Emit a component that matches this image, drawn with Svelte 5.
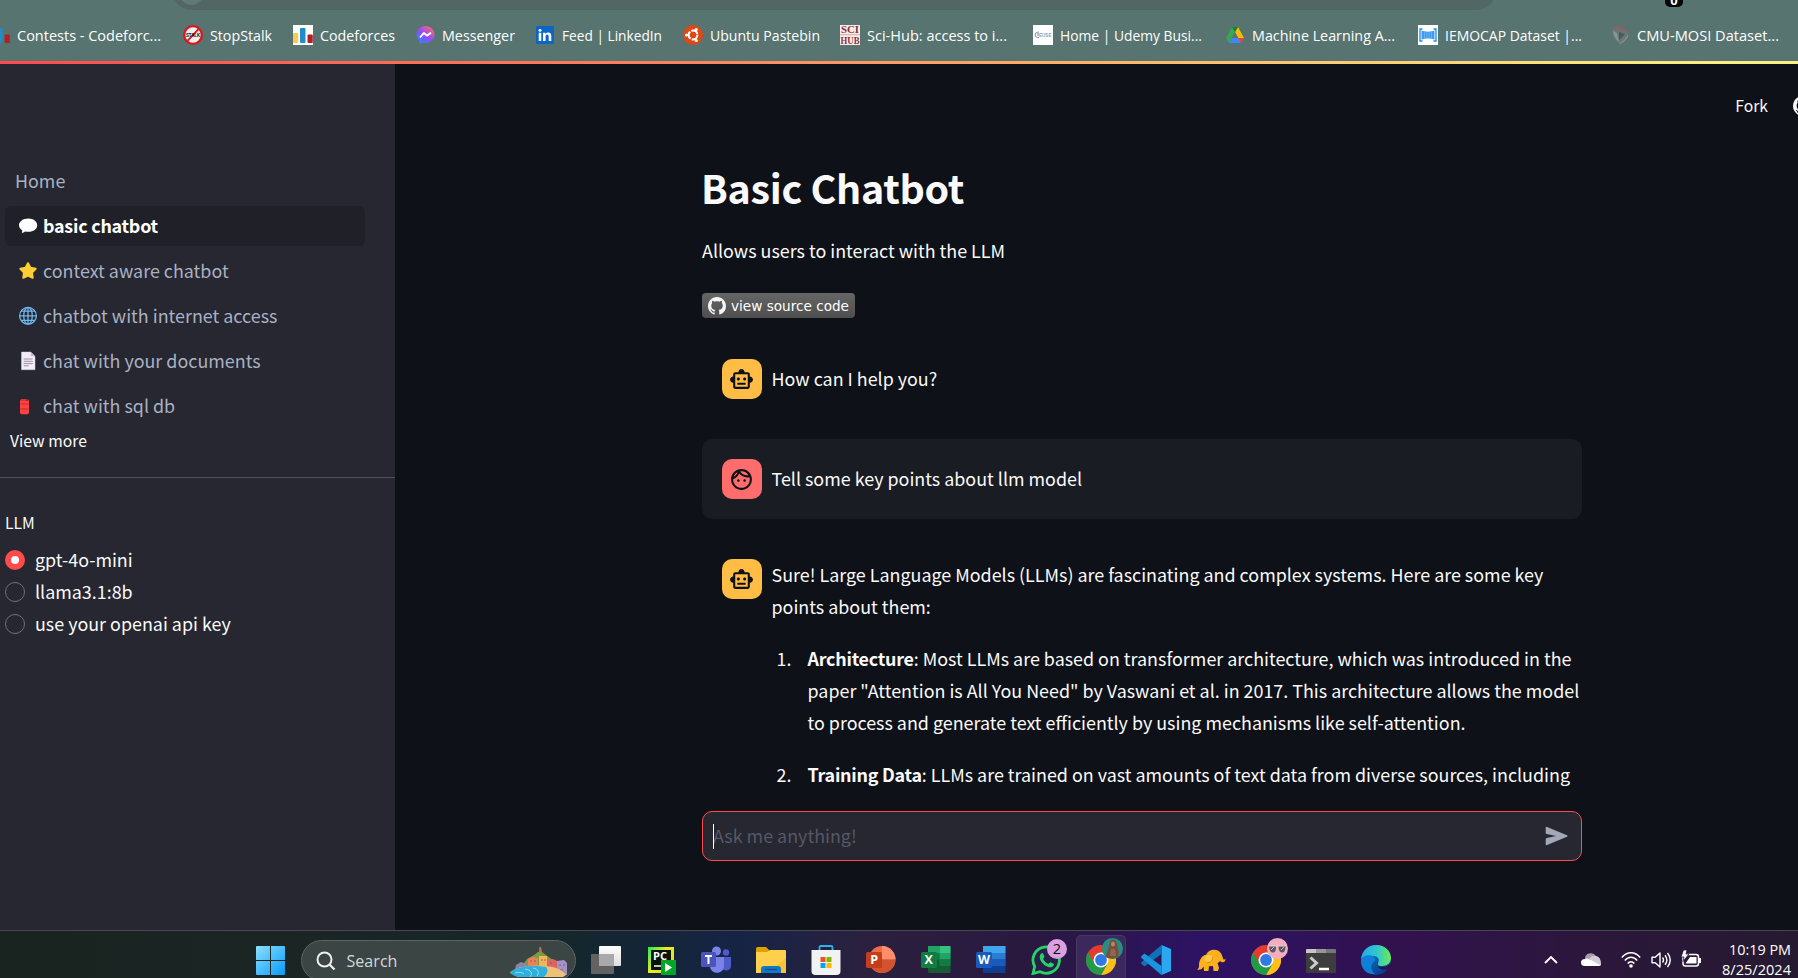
<script lang="ts">
  const bookmarks = [
    { icon: 'cf2', label: 'Contests - Codeforc...', width: 193, text: 144 },
    { icon: 'stop', label: 'StopStalk', width: 110, text: 62 },
    { icon: 'cf', label: 'Codeforces', width: 122, text: 75 },
    { icon: 'messenger', label: 'Messenger', width: 120, text: 73 },
    { icon: 'linkedin', label: 'Feed | LinkedIn', width: 148, text: 100 },
    { icon: 'ubuntu', label: 'Ubuntu Pastebin', width: 157, text: 110 },
    { icon: 'scihub', label: 'Sci-Hub: access to i...', width: 193, text: 140 },
    { icon: 'udemy', label: 'Home | Udemy Busi...', width: 192, text: 142 },
    { icon: 'drive', label: 'Machine Learning A...', width: 193, text: 143 },
    { icon: 'iemocap', label: 'IEMOCAP Dataset |...', width: 192, text: 137 },
    { icon: 'cmu', label: 'CMU-MOSI Dataset...', width: 190, text: 142 },
  ];
  const pages = [
    { icon: 'bubble', label: 'basic chatbot', active: true },
    { icon: 'star', label: 'context aware chatbot' },
    { icon: 'globe', label: 'chatbot with internet access' },
    { icon: 'doc', label: 'chat with your documents' },
    { icon: 'can', label: 'chat with sql db' },
  ];
  const models = ['gpt-4o-mini', 'llama3.1:8b', 'use your openai api key'];
  const apps = ['tasks', 'pycharm', 'teams', 'folder', 'store', 'ppt', 'excel', 'word', 'whatsapp', 'chrome', 'vscode', 'elephant', 'chrome2', 'terminal', 'edge'];
  let selected = $state('gpt-4o-mini');

  const github = 'M8 0C3.58 0 0 3.58 0 8c0 3.54 2.29 6.53 5.47 7.59.4.07.55-.17.55-.38 0-.19-.01-.82-.01-1.49-2.01.37-2.53-.49-2.69-.94-.09-.23-.48-.94-.82-1.13-.28-.15-.68-.52-.01-.53.63-.01 1.08.58 1.23.82.72 1.21 1.87.87 2.33.66.07-.52.28-.87.51-1.07-1.78-.2-3.64-.89-3.64-3.95 0-.87.31-1.59.82-2.15-.08-.2-.36-1.02.08-2.12 0 0 .67-.21 2.2.82.64-.18 1.32-.27 2-.27.68 0 1.36.09 2 .27 1.53-1.04 2.2-.82 2.2-.82.44 1.1.16 1.92.08 2.12.51.56.82 1.27.82 2.15 0 3.07-1.87 3.75-3.65 3.95.29.25.54.73.54 1.48 0 1.07-.01 1.93-.01 2.2 0 .21.15.46.55.38A8.013 8.013 0 0016 8c0-4.42-3.58-8-8-8z';
  const robot = 'M20 9V7c0-1.1-.9-2-2-2h-3c0-1.66-1.34-3-3-3S9 3.34 9 5H6c-1.1 0-2 .9-2 2v2c-1.66 0-3 1.34-3 3s1.34 3 3 3v4c0 1.1.9 2 2 2h12c1.1 0 2-.9 2-2v-4c1.66 0 3-1.34 3-3s-1.34-3-3-3zm-2 10H6V7h12v12zm-9-6c-.83 0-1.5-.67-1.5-1.5S8.17 10 9 10s1.5.67 1.5 1.5S9.83 13 9 13zm7.5-1.5c0 .83-.67 1.5-1.5 1.5s-1.5-.67-1.5-1.5.67-1.5 1.5-1.5 1.5.67 1.5 1.5zM8 15h8v2H8v-2z';
  const face = 'M10.25 13c0 .69-.56 1.25-1.25 1.25S7.75 13.69 7.75 13s.56-1.25 1.25-1.25 1.25.56 1.25 1.25zM15 11.75c-.69 0-1.25.56-1.25 1.25s.56 1.25 1.25 1.25 1.25-.56 1.25-1.25-.56-1.25-1.25-1.25zm7 .25c0 5.52-4.48 10-10 10S2 17.52 2 12 6.48 2 12 2s10 4.48 10 10zM10.66 4.12C12.06 6.44 14.6 8 17.5 8c.46 0 .91-.05 1.34-.12C17.44 5.56 14.9 4 12 4c-.46 0-.91.05-1.34.12zM4.42 9.47c1.71-.97 3.03-2.55 3.66-4.44C6.37 6 5.05 7.58 4.42 9.47zM20 12c0-.78-.12-1.53-.33-2.24-.7.15-1.42.24-2.17.24-3.13 0-5.92-1.44-7.76-3.69C8.69 8.87 6.6 10.88 4 11.86c.01.04 0 .09 0 .14 0 4.41 3.59 8 8 8s8-3.59 8-8z';
</script>

{#snippet siteIcon(name: string)}
  <svg class="fav" viewBox="0 0 20 20">
    {#if name === 'cf' || name === 'cf2'}
      {#if name === 'cf'}<rect width="20" height="20" fill="#fff" />{/if}
      <rect x="0" y="8" width="5.3" height="10" rx="1" fill="#f8cb55" />
      <rect x="7" y="3" width="5.5" height="15" rx="1" fill="#1f8dcb" />
      <rect x="14.5" y="9.5" width="5.3" height="8.5" rx="1" fill="#b21f26" />
    {:else if name === 'stop'}
      <circle cx="10" cy="10" r="8.8" fill="#f3eeee" stroke="#d9171d" stroke-width="2.3" />
      <path d="M15.5 4.2 4.5 15.8" stroke="#d9171d" stroke-width="1.8" />
      <text x="3" y="12" font-family="Liberation Sans" font-size="5.6" font-weight="700" textLength="14" lengthAdjust="spacingAndGlyphs">STALK</text>
    {:else if name === 'messenger'}
      <defs><linearGradient id="ms" x1="0" y1="1" x2=".8" y2="0"><stop offset="0" stop-color="#1694ff" /><stop offset=".5" stop-color="#8b4cff" /><stop offset="1" stop-color="#ff6570" /></linearGradient></defs>
      <path d="M10.500 1C5.400 1 1.500 4.700 1.500 9.600c0 2.700 1.100 4.800 3 6.400v3l3-1.400c1 .3 2 .4 3 .4 5.100 0 9-3.600 9-8.400S15.600 1 10.500 1z" fill="url(#ms)" />
      <path d="m5 12.500 3.800-4.500 3.200 2.600 4-2.800" fill="none" stroke="#fff" stroke-width="1.900" stroke-linejoin="round" />
    {:else if name === 'linkedin'}
      <rect x="1" y="1" width="18" height="18" rx="1.500" fill="#0a66c2" />
      <path d="M3.700 7.800h2.600V16H3.700zM8 7.800h2.500V9c.6-1 1.500-1.500 2.800-1.500 2.300 0 3 1.500 3 3.800V16h-2.600v-4.200c0-1.200-.2-2.200-1.400-2.200-1.300 0-1.700 1-1.700 2.200V16H8z" fill="#fff" /><circle cx="5" cy="5.200" r="1.500" fill="#fff" />
    {:else if name === 'ubuntu'}
      <circle cx="10" cy="10" r="10" fill="#dd4814" />
      <circle cx="10" cy="10" r="4.400" fill="none" stroke="#fff" stroke-width="2" stroke-dasharray="8 1.200" />
      <circle cx="3.600" cy="10" r="1.600" fill="#fff" /><circle cx="13.200" cy="4.500" r="1.600" fill="#fff" /><circle cx="13.200" cy="15.500" r="1.600" fill="#fff" />
    {:else if name === 'scihub'}
      <rect width="20" height="20" fill="#f7eeee" />
      <path d="M0 9.700h20" stroke="#d3aaa8" />
      <text x="1" y="8.200" class="sci" textLength="18" lengthAdjust="spacingAndGlyphs">SCI</text>
      <text x=".5" y="18.500" class="sci" textLength="19" lengthAdjust="spacingAndGlyphs">HUB</text>
    {:else if name === 'udemy'}
      <rect width="20" height="20" fill="#fff" />
      <path d="M6 7c-5 0-5 6 0 5.500M5 8v3" fill="none" stroke="#8b99a0" stroke-width="1.200" />
      <text x="6" y="12" font-family="Liberation Sans" font-size="6" font-weight="700" fill="#78a7be" textLength="12.500" lengthAdjust="spacingAndGlyphs">EUSE</text>
    {:else if name === 'drive'}
      <path d="M7 2h6l6 11h-6z" fill="#fbbc04" /><path d="M7 2 1 13l3 5 9-16z" fill="#34a853" /><path d="M4 18h12l3-5H7z" fill="#4285f4" /><path d="m16 18 3-5h-6z" fill="#ea4335" /><path d="m7 2 3 5 3-5z" fill="#188038" /><path d="m10 7 3.300 6H6.700z" fill="#577470" />
    {:else if name === 'iemocap'}
      <rect width="20" height="20" fill="#fff" />
      <path d="M4.500 4H2v12h2.500M15.500 4H18v12h-2.500" fill="none" stroke="#2187e7" stroke-width="1.300" />
      <path d="M3.500 5.500c3 1.500 10 1.500 13 0v9c-3-1.500-10-1.500-13 0z" fill="#3f9cf2" /><path d="M6.500 7v6M8.800 7v6M11.200 7v6M13.500 7v6" stroke="#8fc5fa" stroke-width=".5" />
    {:else}
      <path d="M2 2c6-1.500 12 0 17 5-1 5-4 10-9 12C5 16 2 10 2 2z" fill="#677775" /><path d="M2 4c3-4 12-3 16 3l-6-2c-4-1-7-1-10-1z" fill="#8f5f65" /><path d="M9 6.500 15 9.500 9 15z" fill="#465e5b" /><path d="m3 6 4 2 2 9C5 14 3 10 3 6z" fill="#879491" /><path d="M9 18c4-1 7-5 9-9v3q-3 5-8 7z" fill="#89918f" />
    {/if}
  </svg>
{/snippet}

{#snippet pageIcon(name: string)}
  <svg class="page-icon" viewBox="0 0 20 20">
    {#if name === 'bubble'}
      <path d="M10.400 2.500c5 0 8.800 2.900 8.800 6.700s-3.800 6.600-8.800 6.600c-1.200 0-2.300-.1-3.300-.4-.8.9-2 1.400-3.400 1.400.5-.8.700-1.700.5-2.600C2.300 12.900 1 11.200 1 9.200c0-3.800 4-6.700 9.400-6.700z" fill="#fff" />
    {:else if name === 'star'}
      <path d="M10 2.200 12.400 6.800 17.700 7.700 14 11.500 14.700 16.800 10 14.600 5.300 16.800 6 11.500 2.300 7.700 7.600 6.800z" fill="#ffce31" stroke="#ffce31" stroke-width="2" stroke-linejoin="round" />
    {:else if name === 'globe'}
      <g fill="none" stroke="#70b7ee" stroke-width="1.300"><circle cx="10" cy="9.800" r="8.400" /><ellipse cx="10" cy="9.800" rx="4.300" ry="8.400" /><path d="M10 1.400v16.800M1.600 9.800h16.800M3 5.200h14M3 14.400h14" /></g>
    {:else if name === 'doc'}
      <path d="M3.500 1h9.200L17 5.300V18.700H3.500z" fill="#f3edf8" stroke="#d7cadd" stroke-width=".5" /><path d="M12.700 1v4.300H17z" fill="#c8b9d3" /><path d="M5.700 8h9M5.700 10.300h9M5.700 12.600h9M5.700 14.800h5" stroke="#9b8eaa" />
    {:else}
      <rect x="2" y="3.200" width="9" height="15" rx="2" fill="#ff4343" /><path d="M2.500 8h8M2.500 13h8" stroke="#bd2631" stroke-width=".9" /><path d="M3 4.300h6.500" stroke="#d92f38" /><circle cx="9" cy="4" r=".8" fill="#501820" />
    {/if}
  </svg>
{/snippet}

{#snippet chrome()}
  <circle cx="15" cy="15" r="15" fill="#e33b2e" />
  <path d="M15 7.500h13A15 15 0 0 1 15 30l6.500-11.250z" fill="#fbc116" />
  <path d="M2 7.500A15 15 0 0 0 15 30l6.500-11.250L15 15l-6.500 3.750z" fill="#229b48" />
  <circle cx="15" cy="15" r="7.500" fill="#fff" /><circle cx="15" cy="15" r="5.900" fill="#2f7ae5" />
{/snippet}

{#snippet appIcon(name: string)}
  <svg class="app-svg" viewBox="0 0 30 30">
    {#if name === 'tasks'}
      <defs><linearGradient id="tv" x2="0" y2="1"><stop stop-color="#fff" /><stop offset="1" stop-color="#ddd" /></linearGradient></defs>
      <rect x="0" y="9" width="23" height="20" rx="1" fill="#626262" /><rect x="8" y="1" width="22" height="20" rx="1" fill="url(#tv)" /><path d="M8 9h15v12H8z" fill="#a9a9a9" />
    {:else if name === 'pycharm'}
      <defs><linearGradient id="py" x2="1" y2=".7"><stop stop-color="#20ed55" /><stop offset=".5" stop-color="#ecec22" /><stop offset="1" stop-color="#d7e515" /></linearGradient></defs>
      <rect x="2" y="2" width="26" height="26" fill="url(#py)" /><rect x="5" y="5" width="20" height="20" fill="#0b1308" />
      <text x="7" y="15.300" font-family="Open Sans" font-size="11" font-weight="700" fill="#fff" textLength="14" lengthAdjust="spacingAndGlyphs">PC</text><path d="M8 21h7" stroke="#fff" stroke-width="1.500" />
      <rect x="15" y="15" width="15" height="15" fill="#05a527" /><path d="m19 18 7 4.500-7 4.500z" fill="#fff" />
    {:else if name === 'teams'}
      <circle cx="15.500" cy="6" r="4.500" fill="#7b83eb" /><circle cx="25" cy="7.500" r="3.200" fill="#5059c9" /><path d="M20 12h10v9c0 5-7 6-10 2z" fill="#5059c9" /><path d="M9 12h14v9c0 9-14 9-14 0z" fill="#7b83eb" /><rect x="0" y="7" width="15" height="15" rx="1.500" fill="#4b53bc" /><path d="M4 11h7M7.500 11v8" stroke="#fff" stroke-width="2" />
    {:else if name === 'folder'}
      <path d="M0 3.500Q0 2 1.500 2H10l3.500 3.500V9H0z" fill="#dda106" /><path d="M0 7h11l3-2h15q1 0 1 1v22H0z" fill="#ffd04b" /><path d="M30 13v15H12z" fill="#f8bd27" opacity=".7" /><path d="M5 28v-4q0-3 3-3h14q3 0 3 3v4z" fill="#1479c5" /><path d="M9 24.500h12" stroke="#0a4d91" stroke-width="1.300" />
    {:else if name === 'store'}
      <path d="M8.500 7V2.500Q8.500 1 10 1h10q1.500 0 1.500 1.500V7" fill="none" stroke="#27b5ec" stroke-width="1.800" /><path d="M.5 5h29v21q0 4-4 4h-21q-4 0-4-4z" fill="#f2f2f3" /><path d="M9.500 12h5v5h-5z" fill="#f25022" /><path d="M15.500 12h5v5h-5z" fill="#7fba00" /><path d="M9.500 18h5v5h-5z" fill="#00a4ef" /><path d="M15.500 18h5v5h-5z" fill="#ffb900" />
    {:else if name === 'ppt'}
      <circle cx="16" cy="14.500" r="13.500" fill="#ed6c47" /><path d="M16 1a13.500 13.500 0 0 1 13.500 13.500H16z" fill="#ff8f6b" /><path d="M2.500 14.500a13.500 13.500 0 0 0 27 0z" fill="#d35230" /><rect x="0" y="7" width="16" height="16" rx="1.500" fill="#c43e1c" /><text class="office" x="4.300" y="19">P</text>
    {:else if name === 'excel'}
      <rect x="7" y="1" width="22.500" height="27" rx="1.500" fill="#185c37" /><path d="M7 1h11.500v7H7z" fill="#21a366" /><path d="M18.500 1h11v7h-11z" fill="#33c481" /><path d="M7 8h11.500v6.500H7z" fill="#107c41" /><path d="M18.500 8h11v6.500h-11z" fill="#21a366" /><path d="M18.500 14.500h11V21h-11z" fill="#107c41" /><rect x="0" y="7" width="16" height="16" rx="1.500" fill="#107c41" /><text class="office" x="3.500" y="19">X</text>
    {:else if name === 'word'}
      <rect x="7" y="1" width="22.500" height="27" rx="1.500" fill="#103f91" /><path d="M7 1h22.500v7H7z" fill="#41a5ee" /><path d="M7 8h22.500v6.500H7z" fill="#2b7cd3" /><path d="M7 14.500h22.500V21H7z" fill="#185abd" /><rect x="0" y="7" width="16" height="16" rx="1.500" fill="#185abd" /><text class="office" x="2" y="19" textLength="12" lengthAdjust="spacingAndGlyphs">W</text>
    {:else if name === 'whatsapp'}
      <path d="M2 28.500 3.700 21.500A13.200 13.200 0 1 1 9 26.700z" fill="#29204a" stroke="#25d366" stroke-width="2.800" /><path d="M10.200 8.500c.8-.8 1.500-.7 2 .3l1.200 2.700c.3.700-1.400 1.900-1.200 2.600 1.100 2.300 2.800 3.800 5 4.700.8.200 1.800-1.800 2.600-1.400l2.700 1.400c.7.400.4 1.400-.2 2.200-1.100 1.300-3 1.600-5 1C12.600 20.500 9 16.500 8.700 12.300c0-1.500.5-2.800 1.500-3.800z" fill="#25d366" />
    {:else if name === 'chrome' || name === 'chrome2'}
      {@render chrome()}
    {:else if name === 'vscode'}
      <path d="M20.500 0 30 4v22l-9.500 4z" fill="#29a8ef" /><path d="M20.500 0v9L3.500 21.500.5 19q-1-1 0-2z" fill="#0f72b5" /><path d="M20.500 30v-9L3.500 8.500.5 11q-1 1 0 2z" fill="#1a94dc" />
    {:else if name === 'elephant'}
      <path d="M1 24.500c1.500-.5 2-2 2-4 0-6 3-10 7.500-11 1-4 7-6 11.500-4 3 1.500 4 4.500 5 8 .4 1.500 1.500 1.500 2.500 0 .3 4-3.500 5-5.500 2.500-1 1.500-2.500 2-2.500 2l1.500 5-1 3h-4.500l-.5-5-4 .3-.5 4.700H8l-.5-4.500c-1 2.500-3.500 4-6.500 3z" fill="#fbb01e" />
      <path d="M8.500 13c1-3 5-4 8-2 0 4-2 6-5 6-2 0-3.500-2-3-4z" fill="#ffcb45" /><path d="M11 17.500c3 .5 5.500-1.500 6-5.500M21 10.500l1 1" fill="none" stroke="#e38a12" stroke-width=".9" />
    {:else if name === 'terminal'}
      <rect x="0" y="4" width="30" height="24" rx="1" fill="#3d3d3e" /><path d="M0 8V5q0-1 1-1h9v4z" fill="#c9c6ca" /><path d="M10 4h10v4H10z" fill="#99969b" /><path d="M20 4h9q1 0 1 1v3H20z" fill="#77747a" /><path d="m4.500 12.500 6 5.500-6 5.500" fill="none" stroke="#ccc" stroke-width="3" /><path d="M13 24h10" stroke="#fff" stroke-width="2.500" />
    {:else}
      <defs><linearGradient id="edg" x2="1"><stop stop-color="#25a8e8" /><stop offset=".55" stop-color="#32c8cb" /><stop offset="1" stop-color="#6cec52" /></linearGradient><linearGradient id="edb" x2=".7" y2="1"><stop stop-color="#1683d6" /><stop offset="1" stop-color="#073f8f" /></linearGradient></defs>
      <circle cx="15" cy="15" r="15" fill="url(#edb)" /><path d="M.2 14C1 5 8 0 15 0c9 0 15 6 15 13 0 5-4 8-9 8-4 0-5-1-4-3 2-3 0-7-4-7C7 11 1 14 .2 14z" fill="url(#edg)" /><path d="M2 12c7-4 13-1 12 4-5 3-5 9 0 13C5 30 0 23 0 16q0-3 2-4z" fill="#0e80d7" /><path d="M17 17c-2 1-1 5 4 5 3 0 6-1 8-3l1.500 2-2 2.500c-7 3-14 0-11.500-6.500z" fill="#2e124d" />
    {/if}
  </svg>
{/snippet}

<div class="screen">
  <header class="browser">
    <div class="omnibox"><i></i></div>
    <span class="ext"><span>0</span></span>
    <nav class="bookmarks">
      {#each bookmarks as b}
        <a class="bookmark" href="#top" style="width:{b.width}px">
          {@render siteIcon(b.icon)}
          <svg class="bm-label" width={b.text + 4} height="24"><text x="0" y="18" textLength={b.text} lengthAdjust="spacingAndGlyphs">{b.label}</text></svg>
        </a>
      {/each}
    </nav>
    <div class="loading"></div>
  </header>

  <div class="body">
    <aside>
      <a class="home" href="#home">Home</a>
      {#each pages as p}
        <a class="page" class:active={p.active} href="#page">{@render pageIcon(p.icon)}<span>{p.label}</span></a>
      {/each}
      <button class="more">View more</button>
      <hr />
      <div class="group">LLM</div>
      {#each models as m}
        <button class="radio" class:on={selected === m} onclick={() => (selected = m)}><i></i><span>{m}</span></button>
      {/each}
    </aside>

    <main>
      <div class="toolbar"><span>Fork</span><svg viewBox="0 0 16 16"><path d={github} fill="#fafafa" /></svg></div>
      <div class="column">
        <h1>Basic Chatbot</h1>
        <p class="lead">Allows users to interact with the LLM</p>
        <a class="source" href="#source"><svg class="gh" viewBox="0 0 16 16"><path d={github} fill="#f5f5f5" /></svg><svg width="120" height="25"><text x="0" y="18" textLength="118" lengthAdjust="spacingAndGlyphs">view source code</text></svg></a>
        <section class="msg first"><div class="avatar bot"><svg viewBox="0 0 24 24"><path d={robot} /></svg></div><p class="single">How can I help you?</p></section>
        <section class="msg user"><div class="avatar human"><svg viewBox="0 0 24 24"><path d={face} /></svg></div><p class="single">Tell some key points about llm model</p></section>
        <section class="msg answer">
          <div class="avatar bot"><svg viewBox="0 0 24 24"><path d={robot} /></svg></div>
          <div class="reply">
            <p>Sure! Large Language Models (LLMs) are fascinating and complex systems. Here are some key<br />points about them:</p>
            <div class="point"><span class="num">1.</span><p><b>Architecture</b>: Most LLMs are based on transformer architecture, which was introduced in the<br />paper "Attention is All You Need" by Vaswani et al. in 2017. This architecture allows the model<br />to process and generate text efficiently by using mechanisms like self-attention.</p></div>
            <div class="point"><span class="num">2.</span><p><b>Training Data</b>: LLMs are trained on vast amounts of text data from diverse sources, including</p></div>
          </div>
        </section>
        <div class="prompt"><i class="caret"></i><span>Ask me anything!</span><svg viewBox="0 0 24 20"><path d="M1.500.8 22 9.300q1.300.7 0 1.400L1.500 19.200Q.7 19.200.7 18.300v-5q0-1.200 1-1.400L11 10 1.700 8.100Q.7 7.900.7 6.700v-5q0-.9.800-.9z" fill="#a3a8b8" /></svg></div>
      </div>
    </main>
  </div>

  <footer>
    <svg class="start" viewBox="0 0 29 29"><defs><linearGradient id="win" x2="1" y2="1"><stop stop-color="#8be0ff" /><stop offset="1" stop-color="#079bf7" /></linearGradient></defs><path d="M0 1q0-1 1-1h13v14H0zM15 0h13q1 0 1 1v13H15zM0 15h14v14H1q-1 0-1-1zM15 15h14v13q0 1-1 1H15z" fill="url(#win)" /></svg>
    <div class="search">
      <svg class="glass" viewBox="0 0 20 20"><circle cx="8.500" cy="8.500" r="7" fill="none" stroke="#eee" stroke-width="2" /><path d="m13.500 13.500 5 5" stroke="#eee" stroke-width="2.300" /></svg>
      <span>Search</span>
      <svg class="town" viewBox="0 0 58 32">
        <path d="M12 19 17 12l7-4 4-3h4l4 3 7 5 5 8H7z" fill="#7a9c3c" /><path d="m29 5 .5-5h1.500l1 5z" fill="#bb7357" /><path d="M6 18l5-3 6 2v6H5z" fill="#8d83a8" />
        <path d="M18 12l4-2 6 1v9H18z" fill="#e78457" /><path d="M29 9h8v10h-8z" fill="#f2b55d" /><path d="M37 13l6-1 4 2v8H37z" fill="#d96562" /><path d="M47 14l7-1 3 3v12H47z" fill="#a393c9" />
        <path d="M20 14h2M24 14h2M31 13h2M34 13h2M40 16h2M49 18h2M53 18h2M50 23h3" stroke="#8c4254" opacity=".7" />
        <path d="M0 26c5-6 18-8 33-7 12 0 20 4 23 9l-3 2H8z" fill="#eec178" />
        <path d="M0 25c8-6 24-7 36-5 3 3 1 7-2 10H12C6 30 2 28 0 25z" fill="#2eafdc" /><path d="M15 22c6 1 8 4 5 8M23 21c6 1 6 5 4 8M5 26c4-1 7-1 9 1" fill="none" stroke="#9be4f5" stroke-width=".9" />
      </svg>
    </div>
    <div class="apps">
      {#each apps as a}
        <div class="app" class:current={a === 'chrome'}>
          {@render appIcon(a)}
          {#if a === 'whatsapp'}<span class="count">2</span>{/if}
          {#if a === 'chrome'}<svg class="profile" viewBox="0 0 21 21"><circle cx="10.500" cy="10.500" r="10.500" fill="#259082" /><path d="M8 4c1-4 6-3 7 2l2 8-1 5q-5 3-13 0c3-4 3-10 5-15z" fill="#76503e" /><ellipse cx="11" cy="6" rx="2" ry="2.500" fill="#b4856c" /><path d="m9 11 4 0 1 7H8z" fill="#966453" /></svg>{/if}
          {#if a === 'chrome2'}<svg class="profile" viewBox="0 0 21 21"><circle cx="10.500" cy="10.500" r="10.500" fill="#f2adc0" /><path d="M2 8h7v3q-1 5-5 3-2-2-2-6zM11.500 8h7q0 6-3 6.500-4 .5-4-6.500z" fill="#5c5861" /><path d="M2 8h16.500" stroke="#ddd3da" /><path d="m4 12 3-3M14 12l3-3" stroke="#b9b4bd" /></svg>{/if}
        </div>
      {/each}
    </div>
    <div class="tray">
      <svg class="chev" viewBox="0 0 14 9"><path d="m1 8 6-6 6 6" fill="none" stroke="#fff" stroke-width="1.900" /></svg>
      <svg class="cloud" viewBox="0 0 20 15"><path d="M4 8a6 6 0 0 1 11-4 5 5 0 0 1 3 8H4z" fill="#a99caf" /><path d="M4 14q-4 0-4-3.500T4 7q2-1 4 0l10 4q2 0 2 2-1 1-2 1z" fill="#fff" /><path d="M8 7q3-4 7-3 5 1 5 8l-1 1z" fill="#d4cbd6" /></svg>
      <svg class="wifi" viewBox="0 0 20 18"><g fill="none" stroke="#fff" stroke-width="1.500"><path d="M.8 6.500c5-6.500 13.400-6.500 18.400 0M3.800 9.500c3.500-4.500 8.900-4.500 12.400 0M6.700 12.500c2-2.500 4.600-2.500 6.600 0" /></g><circle cx="10" cy="15" r="1.800" fill="#fff" /></svg>
      <svg class="vol" viewBox="0 0 20 20"><g fill="none" stroke="#fff" stroke-width="1.400" stroke-linejoin="round"><path d="M1 7.300h3.200L9 3v14l-4.800-4.300H1zM11.500 7.500q2 2.500 0 5M14 5.200q3.800 4.800 0 9.600M16.500 3q5.500 7 0 14" /></g></svg>
      <svg class="bat" viewBox="0 0 20 18"><rect x="2" y="4.500" width="15.500" height="11.500" rx="2.500" fill="none" stroke="#fff" stroke-width="1.500" /><path d="M4.500 13.500 9 7h6.500v6.500zM18 8h2v5h-2z" fill="#fff" /><path d="M2.500 0h3.500L5 4h3l-6 7.500 1-4.500H0z" fill="#fff" stroke="#2b1738" stroke-width=".8" /></svg>
      <div class="clock">
        <svg width="70" height="20"><text x="7" y="15" textLength="62" lengthAdjust="spacingAndGlyphs">10:19 PM</text></svg>
        <svg width="70" height="20"><text x="0" y="15" textLength="69" lengthAdjust="spacingAndGlyphs">8/25/2024</text></svg>
      </div>
    </div>
  </footer>
</div>

<style>
  :global(body) { margin: 0; overflow: hidden; background: #0e1117; }
  * { box-sizing: border-box; }
  a { color: inherit; text-decoration: none; }
  p, h1 { margin: 0; }
  b { letter-spacing: -.24px; }
  svg { display: block; flex: none; }
  button { border: 0; background: none; color: inherit; font: inherit; text-align: left; padding: 0; display: block; }
  .screen { width: 1798px; height: 978px; display: flex; flex-direction: column; overflow: hidden; font-family: "Noto Sans CJK SC", "Noto Sans", sans-serif; font-size: 17.9px; line-height: 32px; color: #fafafa; white-space: nowrap; }

  .browser { position: relative; height: 64px; flex: none; background: #577470; display: flex; flex-direction: column; justify-content: flex-end; overflow: hidden; }
  .omnibox { position: absolute; left: 172px; top: -30px; width: 1324px; height: 40px; border-radius: 20px; background: #526764; }
  .omnibox i { position: absolute; left: 7px; bottom: 5px; width: 25px; height: 25px; border-radius: 50%; background: #5f7976; }
  .ext { position: absolute; left: 1665px; top: 0; width: 18px; height: 7px; border-radius: 0 0 5px 5px; background: #050505; color: #fff; font: 700 13px/18px "Open Sans", sans-serif; text-align: center; overflow: hidden; display: flex; align-items: flex-end; justify-content: center; }
  .ext span { margin-bottom: -2px; }
  .bookmarks { display: flex; height: 51px; padding: 13px 0 0; margin-left: -10px; width: 1820px; }
  .bookmark { display: flex; gap: 7px; flex: none; height: 24px; }
  .fav { width: 20px; height: 20px; margin-top: 2px; }
  .bm-label text { font: 14.300px "Open Sans", sans-serif; fill: #fff; }
  .sci { font: 700 10px "Liberation Serif", serif; fill: #92302f; }
  .loading { height: 3px; flex: none; background: linear-gradient(90deg, #ff4b4b, #ff835d 38%, #ffb96b 64%, #fff083 97%); }

  .body { height: 866px; display: flex; flex: none; }
  aside { width: 395px; flex: none; background: #262730; padding: 96px 0 0; display: flex; flex-direction: column; }
  .home { height: 40px; line-height: 40px; padding-left: 15px; margin-bottom: 6px; color: #a9b1c3; }
  .page { height: 40px; width: 360px; margin: 0 0 5px 5px; padding-left: 12.500px; display: flex; align-items: center; gap: 5.500px; border-radius: 6px; color: #a9b1c3; line-height: 38px; }
  .page span { padding-bottom: 2px; }
  .active { background: #1f2028; color: #fff; font-weight: 700; letter-spacing: -.24px; }
  .page-icon { width: 20px; height: 20px; margin-top: -1px; }
  .more { font-size: 15.700px; line-height: 26px; padding-left: 10px; height: 26px; margin-top: -3px; }
  hr { width: 395px; margin: 23px 0 0; border: 0; border-top: 1px solid #51525b; }
  .group { font-size: 15.700px; line-height: 26px; padding-left: 5px; margin: 32px 0 8px; }
  .radio { height: 32px; padding-left: 5px; display: flex; align-items: center; gap: 10px; }
  .radio i { width: 20px; height: 20px; border-radius: 50%; border: 1px solid #6e6f78; background: #262730; }
  .radio.on i { border: 6px solid #ff4b4b; background: #fafafa; }
  .radio span { padding-bottom: 3px; }

  main { flex: 1; background: #0e1117; overflow: hidden; }
  .toolbar { height: 84px; display: flex; align-items: center; justify-content: flex-end; gap: 25px; margin-right: -15px; font-size: 15.700px; }
  .toolbar svg { width: 20px; height: 20px; }
  .toolbar span { padding-bottom: 1px; }
  .column { width: 880px; margin-left: 307px; }
  h1 { font-size: 39.400px; line-height: 60px; height: 60px; margin: 9px 0 0 -1px; font-weight: 700; letter-spacing: -.3px; }
  .lead { margin-top: 17px; height: 32px; }
  .source { width: 153px; height: 25px; margin-top: 27px; border-radius: 4px; display: flex; align-items: center; gap: 5px; padding-left: 6px; background: linear-gradient(#666, #4e4e4e); }
  .source .gh { width: 18px; height: 18px; }
  .source text { font: 13.500px "DejaVu Sans", sans-serif; fill: #fff; }
  .msg { display: flex; gap: 9.500px; padding: 20px; border-radius: 10px; }
  .first { margin-top: 21px; height: 80px; }
  .user { margin-top: 20px; height: 80px; background: #1a1c24; }
  .answer { margin-top: 20px; height: 252px; padding-right: 0; }
  .avatar { width: 40px; height: 40px; flex: none; border-radius: 10px; display: flex; align-items: center; padding-left: 7px; }
  .avatar svg { width: 25px; height: 25px; fill: #0e1117; }
  .bot { background: #ffbd45; }
  .human { background: #ff6c6c; }
  .single { padding-top: 3px; }
  .reply { padding-top: 0; margin-top: -1px; }
  .point { display: flex; margin-top: 20px; }
  .num { width: 36px; padding-left: 5px; flex: none; }
  .prompt { position: relative; height: 50px; margin-top: 20px; border: 1px solid #ff4b4b; border-radius: 10px; background: #262730; display: flex; align-items: center; justify-content: space-between; padding: 0 12px 0 10px; color: #555867; }
  .prompt span { padding-bottom: 3px; }
  .caret { position: absolute; left: 10px; top: 12px; width: 1px; height: 25px; background: #fff; }
  .prompt svg { width: 24px; height: 20px; }

  footer { height: 48px; flex: none; border-top: 1px solid #4a4852; display: flex; align-items: flex-start; background: linear-gradient(90deg, #19231f, #1b2524 16%, #14272a 31%, #152444 41%, #2b203f 48%, #29193f 57%, #2d1264 67%, #31124d 78%, #2b173a 89%, #251a30); font-family: "Open Sans", sans-serif; }
  .start { width: 29px; height: 29px; margin: 15px 16px 0 256px; }
  .search { width: 275px; height: 41px; margin-top: 9px; flex: none; border: 1px solid #5c6466; border-radius: 21px; background: #3b4544; display: flex; align-items: flex-start; padding-left: 13.500px; }
  .glass { width: 20px; height: 20px; margin-top: 9.500px; }
  .search span { font-size: 16px; line-height: 22px; margin: 9px 0 0 11px; width: 52px; color: #d5d8d8; letter-spacing: .05px; }
  .town { width: 58px; height: 32px; margin: 6px 0 0 111px; }
  .apps { display: grid; grid-template-columns: repeat(15, 55px); height: 47px; margin-left: 2.500px; }
  .app { position: relative; display: flex; justify-content: center; padding-top: 14px; height: 47px; }
  .current { margin: 4px 2.500px 0; border: 1px solid #4c385f; border-bottom: 0; border-radius: 5px 5px 0 0; background: #3b285c; padding-top: 9px; }
  .app-svg { width: 30px; height: 30px; }
  .count { position: absolute; left: 28.500px; top: 8px; width: 20px; height: 20px; border-radius: 50%; background: #dc9fe0; color: #121212; font-size: 14.500px; line-height: 20px; text-align: center; }
  .profile { position: absolute; left: 28px; top: 7px; width: 21px; height: 21px; }
  .current .profile { left: 24.500px; top: 2px; }
  .office { font: 700 12.500px "Open Sans", sans-serif; fill: #fff; }
  .tray { display: flex; align-items: flex-start; margin-left: 140.500px; }
  .chev { width: 14px; height: 9px; margin-top: 24px; }
  .cloud { width: 20px; height: 15px; margin: 21px 0 0 23px; }
  .wifi { width: 20px; height: 18px; margin: 20px 0 0 20px; }
  .vol { width: 20px; height: 20px; margin: 19px 0 0 10px; }
  .bat { width: 20px; height: 18px; margin: 19px 0 0 10px; overflow: visible; }
  .clock { margin: 9px 0 0 20.500px; display: flex; flex-direction: column; }
  .clock text { font: 14.300px "Open Sans", sans-serif; fill: #fff; }
</style>
